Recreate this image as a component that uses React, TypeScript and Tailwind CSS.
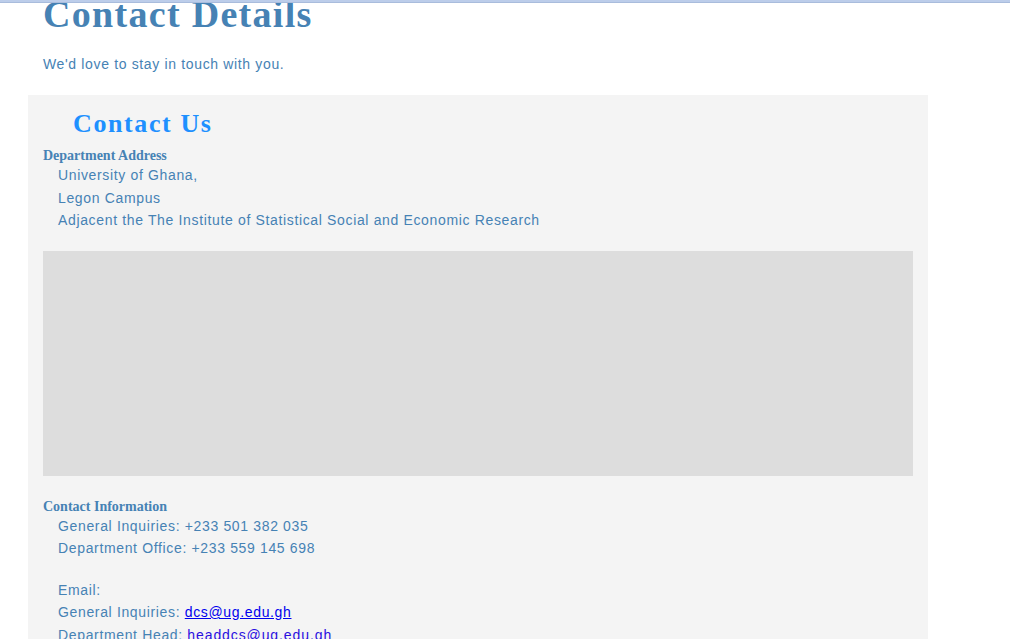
import React from "react";

const serif = { fontFamily: '"Liberation Serif", "Times New Roman", serif' };

function App() {
  return (
    <main
      className="min-h-[100vh] bg-white text-[#4682b4] overflow-hidden"
      style={{ fontFamily: '"Liberation Sans", Arial, sans-serif' }}
    >
      <div className="relative z-10 h-[3px] bg-[#bccdea] border-b border-[#a9bcdc]" />
      <header className="pl-[43px]">
        <h1
          className="text-[38px] leading-none font-bold tracking-[1.3px] -mt-[8px]"
          style={serif}
        >
          Contact Details
        </h1>
        <p className="mt-[23px] mb-[23px] text-[14px] leading-[16px] tracking-[0.65px]">
          We'd love to stay in touch with you.
        </p>
      </header>

      <section className="ml-[28px] w-[900px] bg-[#f4f4f4] px-[15px] pb-10">
        <h2
          className="pt-[16px] pl-[30px] text-[26px] leading-none font-bold tracking-[1.6px] text-[#1e90ff]"
          style={serif}
        >
          Contact Us
        </h2>

        <h3 className="mt-[11px] text-[14px] leading-[16px] font-bold" style={serif}>
          Department Address
        </h3>
        <div className="pl-[15px] text-[14px] leading-[22.5px] tracking-[0.65px]">
          <p>University of Ghana,</p>
          <p>Legon Campus</p>
          <p>Adjacent the The Institute of Statistical Social and Economic Research</p>
        </div>

        <div className="mt-[19px] h-[225px] w-full bg-[#dddddd]" />

        <h3 className="mt-[23px] text-[14px] leading-[16px] font-bold" style={serif}>
          Contact Information
        </h3>
        <div className="pl-[15px] text-[14px] leading-[22.5px] tracking-[0.65px]">
          <p>General Inquiries: +233 501 382 035</p>
          <p>Department Office: +233 559 145 698</p>
          <div className="h-[19px]" />
          <p>Email:</p>
          <p>
            General Inquiries:{" "}
            <a href="#" className="text-[#0000ee] underline">
              dcs@ug.edu.gh
            </a>
          </p>
          <p>
            Department Head:{" "}
            <a href="#" className="text-[#2a0fe0] underline tracking-[0.9px]">
              headdcs@ug.edu.gh
            </a>
          </p>
        </div>
      </section>
    </main>
  );
}

export default App;
